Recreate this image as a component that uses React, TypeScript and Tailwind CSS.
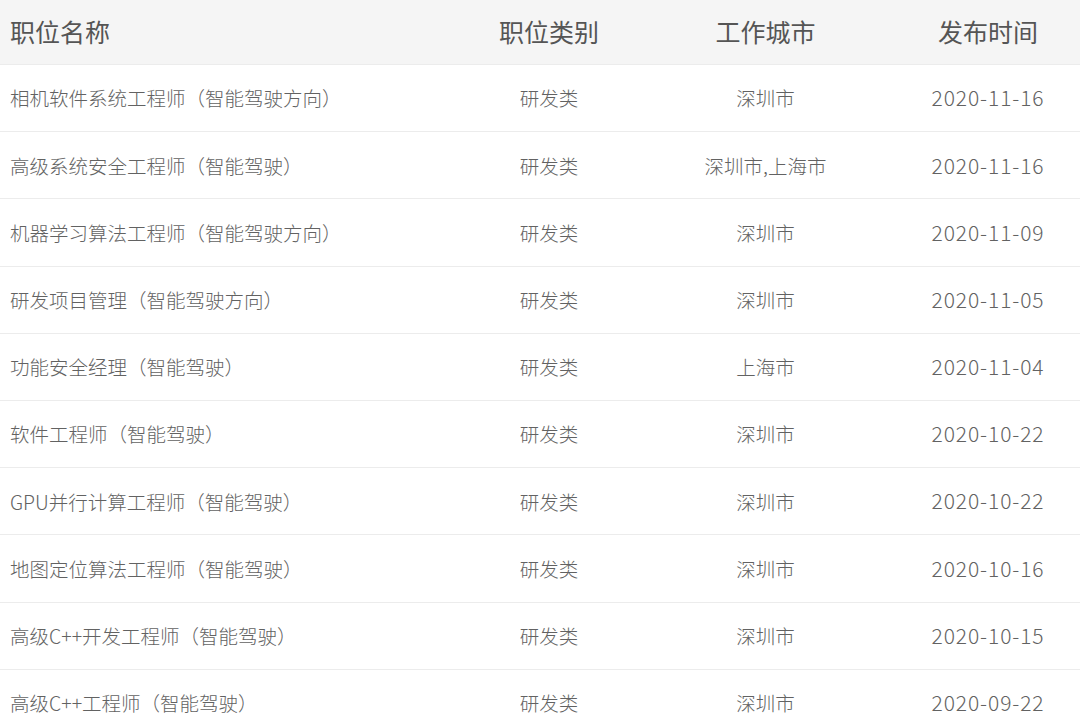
import React from 'react';

type Job = { name: string; type: string; city: string; date: string };

const jobs: Job[] = [
  { name: '相机软件系统工程师（智能驾驶方向）', type: '研发类', city: '深圳市', date: '2020-11-16' },
  { name: '高级系统安全工程师（智能驾驶）', type: '研发类', city: '深圳市,上海市', date: '2020-11-16' },
  { name: '机器学习算法工程师（智能驾驶方向）', type: '研发类', city: '深圳市', date: '2020-11-09' },
  { name: '研发项目管理（智能驾驶方向）', type: '研发类', city: '深圳市', date: '2020-11-05' },
  { name: '功能安全经理（智能驾驶）', type: '研发类', city: '上海市', date: '2020-11-04' },
  { name: '软件工程师（智能驾驶）', type: '研发类', city: '深圳市', date: '2020-10-22' },
  { name: 'GPU并行计算工程师（智能驾驶）', type: '研发类', city: '深圳市', date: '2020-10-22' },
  { name: '地图定位算法工程师（智能驾驶）', type: '研发类', city: '深圳市', date: '2020-10-16' },
  { name: '高级C++开发工程师（智能驾驶）', type: '研发类', city: '深圳市', date: '2020-10-15' },
  { name: '高级C++工程师（智能驾驶）', type: '研发类', city: '深圳市', date: '2020-09-22' },
];

const cols = 'grid grid-cols-[440px_218px_215px_230px] items-center';

export default function App() {
  return (
    <div
      className="w-[1080px] h-[725px] overflow-hidden bg-white"
      style={{ fontFamily: '"Noto Sans CJK SC", "Noto Sans", sans-serif' }}
    >
      {/* Header */}
      <div className={`${cols} h-[65px] bg-[#f5f5f5] border-b border-[#ececec] text-[25px] text-[#555]`}>
        <div className="pl-[10px]">职位名称</div>
        <div className="text-center">职位类别</div>
        <div className="text-center">工作城市</div>
        <div className="text-center">发布时间</div>
      </div>

      {/* Rows */}
      {jobs.map((job) => (
        <div
          key={job.name}
          className={`${cols} h-[67.2px] border-b border-[#ececec] text-[19.5px] text-[#626262] font-light`}
        >
          <div className="pl-[10px] whitespace-nowrap">{job.name}</div>
          <div className="text-center">{job.type}</div>
          <div className="text-center">{job.city}</div>
          <div className="text-center text-[21px] tracking-[0.9px]">{job.date}</div>
        </div>
      ))}
    </div>
  );
}
